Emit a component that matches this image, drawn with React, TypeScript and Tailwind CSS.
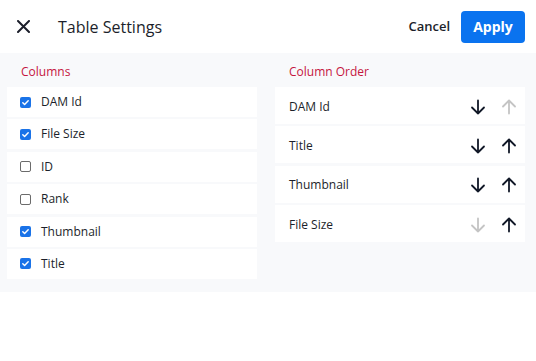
import React from "react";

const columns = [
  { label: "DAM Id", checked: true },
  { label: "File Size", checked: true },
  { label: "ID", checked: false },
  { label: "Rank", checked: false },
  { label: "Thumbnail", checked: true },
  { label: "Title", checked: true },
];

const order = [
  { label: "DAM Id", down: true, up: false },
  { label: "Title", down: true, up: true },
  { label: "Thumbnail", down: true, up: true },
  { label: "File Size", down: false, up: true },
];

function Arrow({ dir, enabled }: { dir: "up" | "down"; enabled: boolean }) {
  return (
    <svg
      width="16"
      height="16"
      viewBox="0 0 16 16"
      fill="none"
      stroke={enabled ? "#111827" : "#c4c4c4"}
      strokeWidth="1.8"
      strokeLinecap="round"
      strokeLinejoin="round"
      className={dir === "up" ? "rotate-180" : ""}
    >
      <path d="M8 1.5v13M2 8.5l6 6 6-6" />
    </svg>
  );
}

function Checkbox({ checked }: { checked: boolean }) {
  if (!checked)
    return <span className="box-border h-[11px] w-[11px] rounded-[2px] border-[1.5px] border-[#6b6b6b] bg-white" />;
  return (
    <span className="flex h-[11px] w-[11px] items-center justify-center rounded-[2px] bg-[#1a73e8]">
      <svg width="9" height="9" viewBox="0 0 10 10" fill="none" stroke="white" strokeWidth="1.6" strokeLinecap="round" strokeLinejoin="round">
        <path d="M2 5.2l2 2L8 3" />
      </svg>
    </span>
  );
}

export default function App() {
  return (
    <div className="h-[361px] w-[536px] bg-white font-['Open_Sans',sans-serif] text-[#1c1f2b]">
      <header className="flex h-[53px] items-center pl-[17px] pr-[11px]">
        <svg width="13" height="13" viewBox="0 0 13 13" stroke="#1c1f2b" strokeWidth="2" strokeLinecap="round">
          <path d="M1 1l11 11M12 1L1 12" />
        </svg>
        <h1 className="ml-[28px] text-[16px] leading-none">Table Settings</h1>
        <div className="ml-auto flex items-center gap-[11px]">
          <button className="text-[13px] font-semibold">Cancel</button>
          <button className="h-[32px] w-[64px] rounded-[4px] bg-[#0a73ef] text-[14px] font-bold text-white">Apply</button>
        </div>
      </header>
      <main className="flex gap-[18px] bg-[#f8f9fb] pb-[13px] pl-[7px] pr-[11px]">
        <section className="flex w-[250px] flex-col">
          <h2 className="flex h-[34px] items-center pl-[14px] pt-[4px] text-[12px] text-[#c5163f]">Columns</h2>
          <div className="flex flex-col gap-[2.4px]">
            {columns.map((c) => (
              <label key={c.label} className="flex h-[30px] items-center gap-[10px] bg-white pl-[13px] text-[12px]">
                <Checkbox checked={c.checked} />
                {c.label}
              </label>
            ))}
          </div>
        </section>
        <section className="flex w-[250px] flex-col">
          <h2 className="flex h-[34px] items-center pl-[14px] pt-[4px] text-[12px] text-[#c5163f]">Column Order</h2>
          <div className="flex flex-col gap-[2.4px]">
            {order.map((o) => (
              <div key={o.label} className="flex h-[37px] items-center bg-white pl-[14px] pr-[8px] pt-[2px] text-[12px]">
                <span>{o.label}</span>
                <div className="ml-auto flex items-center gap-[15px]">
                  <Arrow dir="down" enabled={o.down} />
                  <Arrow dir="up" enabled={o.up} />
                </div>
              </div>
            ))}
          </div>
        </section>
      </main>
    </div>
  );
}
